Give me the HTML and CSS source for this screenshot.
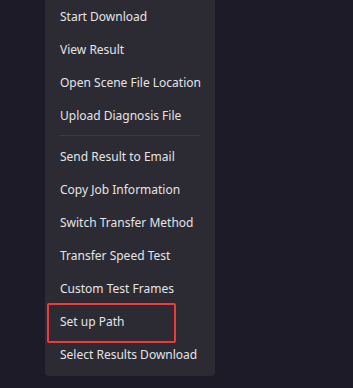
FILE: index.html
```html
<!DOCTYPE html>
<html lang="en">

<head>
    <meta charset="UTF-8">
    <meta name="viewport" content="width=device-width, initial-scale=1.0">
    <title>Job Menu</title>
    <link rel="stylesheet" href="styles.css">
</head>

<body>
    <div class="menu">
        <div class="menu-item">Start Download</div>
        <div class="menu-item">View Result</div>
        <div class="menu-item">Open Scene File Location</div>
        <div class="menu-item">Upload Diagnosis File</div>
        <div class="divider"></div>
        <div class="menu-item">Send Result to Email</div>
        <div class="menu-item">Copy Job Information</div>
        <div class="menu-item">Switch Transfer Method</div>
        <div class="menu-item">Transfer Speed Test</div>
        <div class="menu-item">Custom Test Frames</div>
        <div class="menu-item highlight">Set up Path</div>
        <div class="menu-item">Select Results Download</div>
    </div>
</body>

</html>
```

FILE: styles.css
```css
body {
    font-family: "Noto Sans", "Open Sans", sans-serif;
    background-color: #1c1b27;
    margin: 0;
    padding: 0;
}

.menu {
    width: 170px;
    margin-left: 45px;
    padding-bottom: 5px;
    background-color: #2c2b34;
    border-radius: 0 0 4px 4px;
}

.menu-item {
    position: relative;
    height: 33px;
    line-height: 33px;
    padding-left: 15px;
    font-size: 12px;
    color: #e4e4e6;
    white-space: nowrap;
}

.divider {
    height: 1px;
    margin: 3px 15px 4px;
    background-color: #3c3b44;
}

/* red outline around the item */
.highlight::after {
    content: "";
    position: absolute;
    left: 2px;
    top: -2px;
    width: 125px;
    height: 36px;
    border: 2px solid #f03a3a;
    border-radius: 2px;
}
```
